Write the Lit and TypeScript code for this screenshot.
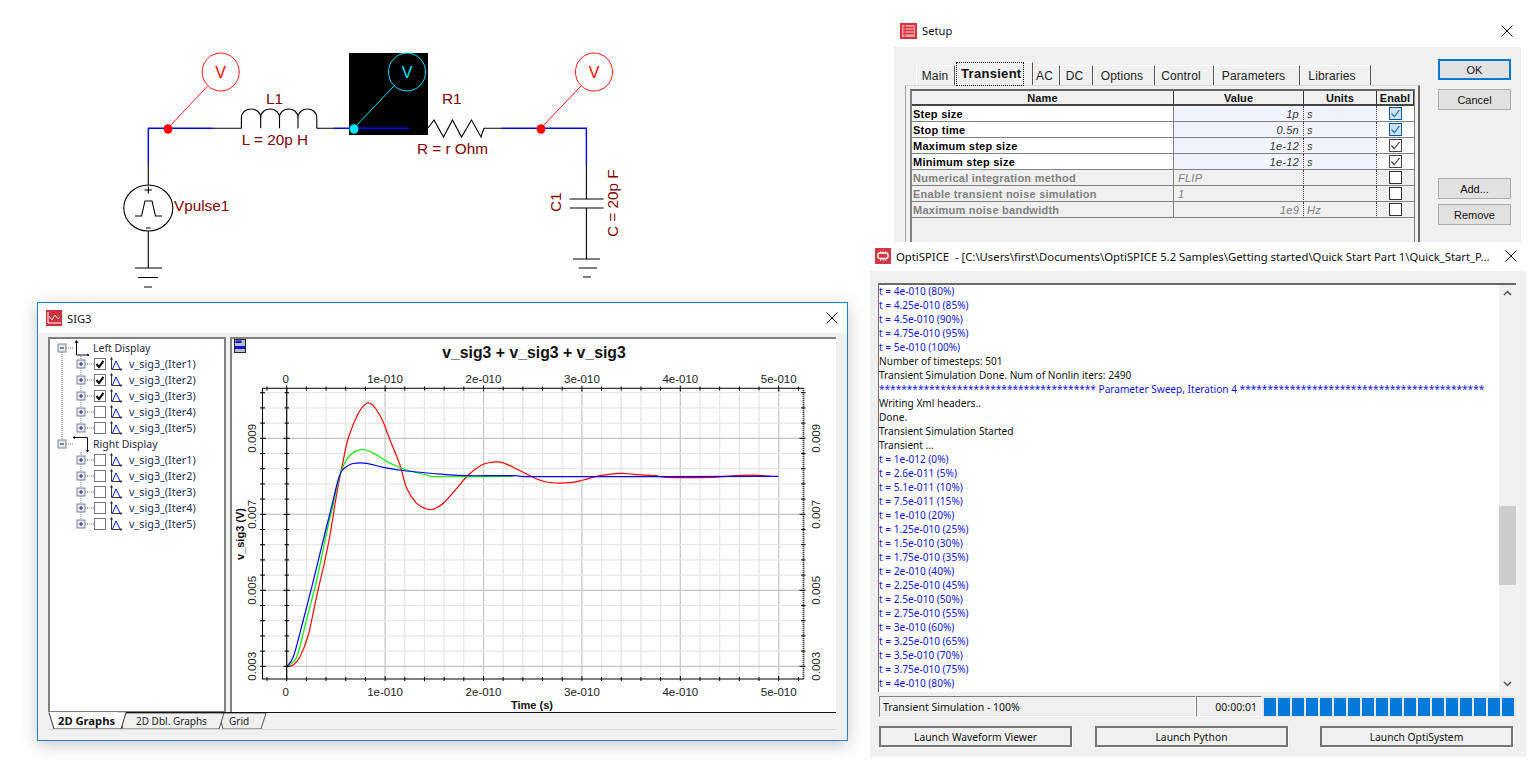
import { LitElement, html, css, svg } from "lit";
import { customElement } from "lit/decorators.js";

const SANS = css`"Liberation Sans", Arial, sans-serif`;
const UI = css`"Noto Sans", "Open Sans", sans-serif`;

/* ---------- circuit ---------- */
@customElement("circuit-view")
class CircuitView extends LitElement {
  static styles = css`
    :host { display: block; position: absolute; left: 0; top: 0; }
    svg { display: block; }
    text { font-family: ${SANS}; font-size: 15.3px; fill: #800000; }
    .v { font-size: 16px; fill: #ff0000; text-anchor: middle; }
    .vc { font-size: 16px; fill: #00e5ff; text-anchor: middle; }
    .blk { stroke: #000; fill: none; stroke-width: 1.1; }
    .blu { stroke: #0000ff; fill: none; stroke-width: 1.4; }
    .red { stroke: #ff0000; fill: none; stroke-width: .9; }
    .cy { stroke: #00e5ff; fill: none; stroke-width: 1; }
  `;
  probe(cx: number, dx: number, cyan = false) {
    const c = cyan ? "cy" : "red";
    const col = cyan ? "#00e5ff" : "#ff0000";
    return svg`
      <ellipse class=${c} cx=${cx} cy="72" rx="18.5" ry="19"></ellipse>
      <text class=${cyan ? "vc" : "v"} x=${cx} y="78">V</text>
      <line class=${c} x1=${dx} y1="128" x2=${cx - 13} y2="86"></line>
      <ellipse cx=${dx} cy="129" rx="4.4" ry="4.8" fill=${col}></ellipse>`;
  }
  render() {
    return html`<svg width="700" height="300" viewBox="0 0 700 300">
      <rect x="349" y="53" width="79" height="82" fill="#000"></rect>
      <path class="blk" d="M148.3 165V185M148.3 231V268M135 268H162M138 277.5H158M144 287H152"></path>
      <ellipse class="blk" cx="148.3" cy="208" rx="24.5" ry="23"></ellipse>
      <path class="blk" d="M135 216H141.5L145 201H152L155.5 216H162"></path>
      <path class="blk" stroke-width="1" d="M144.5 190H152M148.3 186.5V193.500M146 228H150.500"></path>
      <path class="blu" d="M148.3 165V128.300H213"></path>
      <path class="blk" d="M213 128.300H241.400M316.800 128.300H334"></path>
      <path class="blk" d="M241.400 128.300V118C241.400 106 260.700 106 260.700 118V128.300M260.700 118C260.700 106 279.500 106 279.500 118V128.300M279.500 118C279.500 106 298 106 298 118V128.300M298 118C298 106 316.800 106 316.800 118V128.300"></path>
      <path class="blu" d="M334 128.300H409"></path>
      <path class="blk" d="M428 128L434 120L443.500 137L452.500 120L461.500 137L471.500 120L481 137L484 128.300H502"></path>
      <path class="blu" d="M502 128.300H586.400V165"></path>
      <path class="blk" d="M586.400 165V199M569.600 199H603.600M569.600 208H603.600M586.400 208V259M573 259H600M578.600 268H597M583 277H591"></path>
      ${this.probe(220.7, 168)}
      ${this.probe(407, 354, true)}
      ${this.probe(594, 541)}
      <text x="266" y="104">L1</text>
      <text x="241.800" y="145">L = 20p H</text>
      <text x="442" y="104">R1</text>
      <text x="417" y="154">R = r Ohm</text>
      <text x="174" y="210.500">Vpulse1</text>
      <text transform="translate(561 212) rotate(-90)">C1</text>
      <text transform="translate(617.500 237) rotate(-90)">C = 20p F</text>
    </svg>`;
  }
}

/* ---------- shared icons ---------- */
const closeX = html`<svg width="12" height="12" viewBox="0 0 12 12"><path d="M.5.5L11.500 11.500M11.500.5L.5 11.500" stroke="#111" stroke-width="1" fill="none"></path></svg>`;
const setupIcon = html`<svg width="17" height="16" viewBox="0 0 17 16"><rect width="17" height="16" fill="#d9303c"></rect><rect x="2" y="2" width="13" height="12" fill="#e8a0a6"></rect><path d="M3 4.500H14M3 7.500H14M3 10.500H14" stroke="#d9303c" stroke-width="1.300"></path><path d="M5 2V14" stroke="#d9303c" stroke-width="1"></path></svg>`;
const spiceIcon = html`<svg width="16" height="16" viewBox="0 0 16 16"><rect width="16" height="16" fill="#d03a44"></rect><rect x="3" y="5" width="10" height="5.500" rx="2" fill="none" stroke="#fff" stroke-width="1.300"></rect><path d="M5.500 3.500V5M8 3.500V5M10.500 3.500V5M5.500 10.500V12.500M8 10.500V12.500M10.500 10.500V12.500" stroke="#fff" stroke-width="1.100"></path></svg>`;
const sigIcon = html`<svg width="16" height="16" viewBox="0 0 16 16"><rect width="16" height="16" fill="#c8323c"></rect><path d="M2 2V13H15" stroke="#fff" fill="none" stroke-width="1"></path><path d="M3 6L6 10L9 5L12 9L14 7" stroke="#ffe6e6" fill="none" stroke-width="1"></path></svg>`;

/* ---------- Setup dialog ---------- */
type Row = { name: string; value: string; right: boolean; unit: string; check: "blue" | "on" | "off"; off: boolean };
const ROWS: Row[] = [
  { name: "Step size", value: "1p", right: true, unit: "s", check: "blue", off: false },
  { name: "Stop time", value: "0.5n", right: true, unit: "s", check: "blue", off: false },
  { name: "Maximum step size", value: "1e-12", right: true, unit: "s", check: "on", off: false },
  { name: "Minimum step size", value: "1e-12", right: true, unit: "s", check: "on", off: false },
  { name: "Numerical integration method", value: "FLIP", right: false, unit: "", check: "off", off: true },
  { name: "Enable transient noise simulation", value: "1", right: false, unit: "", check: "off", off: true },
  { name: "Maximum noise bandwidth", value: "1e9", right: true, unit: "Hz", check: "off", off: true },
];
const TABS: [string, number][] = [
  ["Main", 39], ["Transient", 78], ["AC", 27], ["DC", 33], ["Options", 62], ["Control", 59], ["Parameters", 86], ["Libraries", 71],
];

@customElement("setup-dialog")
class SetupDialog extends LitElement {
  static styles = css`
    :host { display: flex; flex-direction: column; position: absolute; left: 894px; top: 15px; width: 627px; height: 227px; overflow: hidden; background: #fff; }
    .title { height: 32px; flex: none; box-sizing: border-box; padding: 0 8px 1px 6px; display: flex; align-items: center; gap: 5px; font: 11.2px ${UI}; color: #111; }
    .title span { flex: 1; }
    .body { flex: 1; display: flex; background: #f0f0f0; padding: 12px 10px 0 11px; gap: 18px; min-height: 0; }
    .left { width: 515px; flex: none; display: flex; flex-direction: column; }
    .tabs { height: 26px; flex: none; display: flex; align-items: flex-end; padding-left: 11px; font: 12px ${SANS}; letter-spacing: .15px; color: #222; }
    .tab { height: 20px; box-sizing: border-box; border-top: 1px solid #fff; border-left: 1px solid #fff; border-right: 1.5px solid #555; display: flex; align-items: center; justify-content: center; padding: 1px 4px 0 0; flex: none; }
    .tab:first-child { padding-right: 1px; }
    .tab:nth-child(n+6) { padding-right: 7px; }
    .tab.sel { height: 23px; font: bold 13px ${SANS}; letter-spacing: .3px; color: #111; padding: 0; position: relative; z-index: 1; justify-content: flex-start; }
    .tab.sel b { font-weight: bold; outline: 1px dotted #111; padding: 3px 1px 4px 4px; display: block; margin-left: 1px; }
    .frame { flex: 1; border-top: 1px solid #d8d8d8; border-left: 1px solid #a0a0a0; border-right: 2px solid #666; padding: 3px 0 0 4px; min-height: 0; display: flex; }
    .grid { flex: none; height: 200px; border-left: 2px solid #808080; border-right: 1px solid #808080; border-top: 2px solid #666; display: grid; grid-template-columns: 262px 130px 73px 37px; grid-template-rows: 15px repeat(7, 16px); align-content: start; font: 11px ${SANS}; letter-spacing: .25px; }
    .c { box-sizing: border-box; border-bottom: 1px solid #808080; display: flex; align-items: center; overflow: hidden; white-space: nowrap; }
    .h { font-weight: bold; justify-content: center; background: #f0f0f0; border-bottom: 2px solid #444; border-right: 1px solid #333; color: #111; letter-spacing: .1px; }
    .name { font-weight: bold; background: #fff; color: #000; padding-left: 1px; border-right: 1px solid #808080; }
    .val { font-style: italic; background: #f1f3fe; color: #333; padding: 0 4px; justify-content: flex-start; border-right: 1px dotted #444; }
    .val.r { justify-content: flex-end; }
    .unit { font-style: italic; background: #f1f3fe; color: #333; padding-left: 3px; border-right: 1px dotted #444; }
    .chk { background: #fff; justify-content: center; }
    .off.name, .off.val, .off.unit { background: #f0f0f0; color: #808080; }
    .off.chk { background: #f0f0f0; }
    .btns { width: 73px; flex: none; display: flex; flex-direction: column; }
    .btn { height: 21px; box-sizing: border-box; border: 1px solid #adadad; background: #e1e1e1; font: 11px ${SANS}; color: #111; display: flex; align-items: center; justify-content: center; flex: none; }
    .btn.def { border: 2px solid #0078d7; }
    .b2 { margin-top: 9px; }
    .b3 { margin-top: 68px; }
    .b4 { margin-top: 5px; }
  `;
  check(k: Row["check"]) {
    if (k === "blue") return html`<svg width="13" height="13" viewBox="0 0 13 13"><rect x=".5" y=".5" width="12" height="12" fill="#cce4f7" stroke="#005499"></rect><path d="M2.500 6.500L5.300 9.500L10.500 3" stroke="#2b6ea8" stroke-width="1.200" fill="none"></path></svg>`;
    if (k === "on") return html`<svg width="13" height="13" viewBox="0 0 13 13"><rect x=".5" y=".5" width="12" height="12" fill="#fff" stroke="#444"></rect><path d="M2.500 6.500L5.300 9.500L10.500 3" stroke="#444" stroke-width="1.200" fill="none"></path></svg>`;
    return html`<svg width="13" height="13" viewBox="0 0 13 13"><rect x=".5" y=".5" width="12" height="12" fill="#fff" stroke="#333"></rect></svg>`;
  }
  render() {
    return html`
      <div class="title">${setupIcon}<span>Setup</span>${closeX}</div>
      <div class="body">
        <div class="left">
          <div class="tabs">
            ${TABS.map(([t, w], i) => i === 1
              ? html`<div class="tab sel" style="width:${w}px"><b>${t}</b></div>`
              : html`<div class="tab" style="width:${w}px">${t}</div>`)}
          </div>
          <div class="frame">
            <div class="grid">
              <div class="c h">Name</div><div class="c h">Value</div><div class="c h">Units</div><div class="c h">Enabl</div>
              ${ROWS.map((r) => {
                const o = r.off ? "off" : "";
                return html`
                  <div class="c name ${o}">${r.name}</div>
                  <div class="c val ${o} ${r.right ? "r" : ""}">${r.value}</div>
                  <div class="c unit ${o}">${r.unit}</div>
                  <div class="c chk ${o}">${this.check(r.check)}</div>`;
              })}
            </div>
          </div>
        </div>
        <div class="btns">
          <div class="btn def">OK</div>
          <div class="btn b2">Cancel</div>
          <div class="btn b3">Add...</div>
          <div class="btn b4">Remove</div>
        </div>
      </div>`;
  }
}

/* ---------- OptiSPICE log window ---------- */
const pct = (v: string, p: number) => `t = ${v} (${p}%)`;
const STARS_L = "*".repeat(39);
const STARS_R = "*".repeat(44);
const LOG: [string, boolean][] = [
  [pct("4e-010", 80), true], [pct("4.25e-010", 85), true], [pct("4.5e-010", 90), true], [pct("4.75e-010", 95), true], [pct("5e-010", 100), true],
  ["Number of timesteps: 501", false],
  ["Transient Simulation Done. Num of Nonlin iters: 2490", false],
  [`${STARS_L} Parameter Sweep, Iteration 4 ${STARS_R}`, true],
  ["Writing Xml headers..", false], ["Done.", false], ["Transient Simulation Started", false], ["Transient ...", false],
  [pct("1e-012", 0), true], [pct("2.6e-011", 5), true], [pct("5.1e-011", 10), true], [pct("7.5e-011", 15), true], [pct("1e-010", 20), true],
  [pct("1.25e-010", 25), true], [pct("1.5e-010", 30), true], [pct("1.75e-010", 35), true], [pct("2e-010", 40), true], [pct("2.25e-010", 45), true],
  [pct("2.5e-010", 50), true], [pct("2.75e-010", 55), true], [pct("3e-010", 60), true], [pct("3.25e-010", 65), true], [pct("3.5e-010", 70), true],
  [pct("3.75e-010", 75), true], [pct("4e-010", 80), true],
];

@customElement("log-window")
class LogWindow extends LitElement {
  static styles = css`
    :host { display: flex; flex-direction: column; position: absolute; left: 870px; top: 242px; width: 656px; height: 515px; background: #fff; font: 10.5px ${UI}; color: #111; }
    .title { height: 29px; flex: none; box-sizing: border-box; padding: 0 9px 1px 5px; display: flex; align-items: center; gap: 5px; font: 11.3px ${UI}; white-space: pre; color: #111; }
    .title span { flex: 1; overflow: hidden; }
    .body { flex: 1; background: #f0f0f0; display: flex; flex-direction: column; padding: 12px 10px 10px 9px; }
    .log { height: 409px; flex: none; display: flex; box-sizing: border-box; border-top: 2px solid #696969; border-left: 1px solid #696969; background: #fff; margin-left: -1px; }
    .lines { flex: 1; min-width: 0; overflow: hidden; font-size: 10.1px; margin-top: -1px; }
    .line { height: 14px; line-height: 14px; white-space: nowrap; color: #111; }
    .line.b { color: #1414e6; }
    .sb { width: 17px; flex: none; background: #f0f0f0; display: flex; flex-direction: column; justify-content: space-between; align-items: center; position: relative; padding: 5px 0; box-sizing: border-box; }
    .thumb { position: absolute; left: 0; right: 0; top: 221px; height: 79px; background: #cdcdcd; }
    .status { display: flex; height: 21px; margin-top: 4px; flex: none; }
    .st { box-sizing: border-box; border-top: 1px solid #808080; border-left: 1px solid #808080; border-right: 1px solid #fff; border-bottom: 1px solid #fff; display: flex; align-items: center; }
    .s1 { width: 319px; padding-left: 3px; }
    .s2 { width: 66px; justify-content: flex-end; padding-right: 4px; }
    .prog { flex: 1; display: flex; gap: 2px; padding: 2px 2px 1px 2px; background: #e6e6e6; }
    .seg { width: 12px; flex: none; background: #0078d7; }
    .cmdb { width: 193px; height: 21px; box-sizing: border-box; border: 2px solid #757575; box-shadow: 1px 1px 0 #fff; display: flex; align-items: center; justify-content: center; font-size: 10.3px; }
    .gap { margin-left: 23px; }
    .gap2 { margin-left: 32px; }
    .cmdrow { display: flex; margin-top: 9px; }
  `;
  render() {
    return html`
      <div class="title">${spiceIcon}<span>OptiSPICE  - [C:\\Users\\first\\Documents\\OptiSPICE 5.2 Samples\\Getting started\\Quick Start Part 1\\Quick_Start_P...</span>${closeX}</div>
      <div class="body">
        <div class="log">
          <div class="lines">${LOG.map(([t, b]) => html`<div class="line ${b ? "b" : ""}">${t}</div>`)}</div>
          <div class="sb">
            <div class="thumb"></div>
            <svg width="9" height="6" viewBox="0 0 9 6"><path d="M1 5L4.500 1.500L8 5" stroke="#505050" stroke-width="1.500" fill="none"></path></svg>
            <svg width="9" height="6" viewBox="0 0 9 6"><path d="M1 1L4.500 4.500L8 1" stroke="#505050" stroke-width="1.500" fill="none"></path></svg>
          </div>
        </div>
        <div class="status">
          <div class="st s1">Transient Simulation - 100%</div>
          <div class="st s2">00:00:01</div>
          <div class="prog">${Array.from({ length: 18 }, () => html`<div class="seg"></div>`)}</div>
        </div>
        <div class="cmdrow">
          <div class="cmdb">Launch Waveform Viewer</div>
          <div class="cmdb gap">Launch Python</div>
          <div class="cmdb gap2">Launch OptiSystem</div>
        </div>
      </div>`;
  }
}

/* ---------- Plot ---------- */
const RED = "286.7,666.3 293.3,665 300,656.7 308.3,635 317.3,593.3 325,560 330.7,531 336,498 341.7,468 348.3,438 358.3,413.3 365,404.5 370,403.3 376.7,410 383.3,422.3 390,440 400,465 406.7,488.3 416.7,503.3 426.7,509 433.3,509.3 443.3,503.3 456.7,488.3 468.3,475 481.7,465 491.7,462.3 501.7,462.3 516.7,469 536.7,479 550,482.5 570,482.7 583.3,480 600,475.7 620,473.3 633.3,474.3 655,475.7 666.7,477.3 712.7,477.3 725,476.3 741.7,475.3 758,475.3 770,476.3";
const GREEN = "286.7,666.3 296.7,656.7 307.3,616.7 316.7,580 326.7,532.5 333,505 338,482 342,469 346,460.5 351,454.5 357,450.7 366,450 376.7,455 390,463.3 406.7,470 426.7,475 440,476.7 513.3,476.3";
const BLUE = "286.7,666.3 293.3,656.7 303.3,620 312.7,583.3 325,533 332,505 337,484 341,472 346,467 353,463.5 366.7,463.3 383.3,467.3 406.7,471 443.3,474.3 466.7,475.7 513.3,475.7 550,476.7 778.3,476.3";

/* smooth a measured polyline with a Catmull-Rom spline */
const smooth = (pts: string) => {
  const p = pts.split(" ").map((s) => s.split(",").map(Number));
  let d = `M${p[0][0]} ${p[0][1]}`;
  for (let i = 0; i < p.length - 1; i++) {
    const a = p[Math.max(i - 1, 0)], b = p[i], c = p[i + 1], e = p[Math.min(i + 2, p.length - 1)];
    const c1x = b[0] + (c[0] - a[0]) / 6, c1y = b[1] + (c[1] - a[1]) / 6;
    const c2x = c[0] - (e[0] - b[0]) / 6, c2y = c[1] - (e[1] - b[1]) / 6;
    d += `C${c1x.toFixed(1)} ${c1y.toFixed(1)} ${c2x.toFixed(1)} ${c2y.toFixed(1)} ${c[0]} ${c[1]}`;
  }
  return d;
};

const X0 = 286.7, DX = 19.68, Y0 = 666.3, DY = 15.2;
const range = (a: number, b: number) => Array.from({ length: b - a + 1 }, (_, i) => a + i);

@customElement("plot-view")
class PlotView extends LitElement {
  static styles = css`
    :host { display: block; background: #fff; border-left: 2px solid #808080; border-top: 2px solid #808080; box-sizing: border-box; overflow: hidden; }
    svg { display: block; }
    text { font-family: ${SANS}; font-size: 11.5px; fill: #222; }
    .m { text-anchor: middle; }
    .ttl { font-size: 15.8px; font-weight: bold; fill: #111; text-anchor: middle; }
    .b { font-size: 11px; font-weight: bold; fill: #111; }
  `;
  render() {
    const xs = range(-1, 26);
    const ys = range(0, 18);
    const xl: [number, string][] = [[0, "0"], [5, "1e-010"], [10, "2e-010"], [15, "3e-010"], [20, "4e-010"], [25, "5e-010"]];
    const yl: [number, string][] = [[0, "0.003"], [5, "0.005"], [10, "0.007"], [15, "0.009"]];
    return html`<svg width="604" height="373" viewBox="232 339 604 373">
      ${range(0, 25).map((k) => svg`<line x1=${X0 + DX * k} x2=${X0 + DX * k} y1="389" y2="678" stroke=${k % 5 === 0 ? "#c4c4c4" : "#e6e6e6"} stroke-width="1.200"></line>`)}
      ${ys.map((j) => svg`<line x1="263" x2="803" y1=${Y0 - DY * j} y2=${Y0 - DY * j} stroke=${j % 5 === 0 ? "#c4c4c4" : "#e6e6e6"} stroke-width="1.200"></line>`)}
      <path d=${smooth(RED)} fill="none" stroke="#ff0000" stroke-width="1.200"></path>
      <path d=${smooth(GREEN)} fill="none" stroke="#00f000" stroke-width="1.200"></path>
      <path d=${smooth(BLUE)} fill="none" stroke="#0000ff" stroke-width="1.200"></path>
      <path d="M262.500 388.300H803.500M262.500 388.300V679M286.700 388.300V679" stroke="#000" stroke-width="1.100" fill="none"></path>
      <path d="M262.500 679H803.500M803.500 388.300V679" stroke="#000" stroke-width="1.800" stroke-dasharray="1 1" fill="none"></path>
      ${xs.map((k) => { const x = X0 + DX * k; const big = k % 5 === 0; return svg`
        <line x1=${x} x2=${x} y1=${big ? 385.5 : 386.5} y2=${big ? 391.5 : 390.5} stroke="#000"></line>
        <line x1=${x} x2=${x} y1=${big ? 676 : 677} y2="681" stroke="#000"></line>`; })}
      ${ys.map((j) => { const y = Y0 - DY * j; const big = j % 5 === 0; return svg`
        <line x1="260" x2=${big ? 266 : 265} y1=${y} y2=${y} stroke="#000"></line>
        <line x1=${big ? 283.5 : 284.5} x2=${big ? 290 : 289} y1=${y} y2=${y} stroke="#000"></line>
        <line x1=${big ? 799.5 : 801} x2="805.500" y1=${y} y2=${y} stroke="#000"></line>`; })}
      <text class="ttl" x="534" y="358">v_sig3 + v_sig3 + v_sig3</text>
      ${xl.map(([k, t]) => svg`
        <text class="m" x=${X0 + DX * k - (k === 0 ? 1 : 0)} y="383">${t}</text>
        <text class="m" x=${X0 + DX * k - (k === 0 ? 1 : 0)} y="696">${t}</text>`)}
      ${yl.map(([j, t]) => svg`
        <text class="m" transform="translate(256 ${Y0 - DY * j}) rotate(-90)">${t}</text>
        <text class="m" transform="translate(820 ${Y0 - DY * j}) rotate(-90)">${t}</text>`)}
      <text class="b m" transform="translate(244 534) rotate(-90)">v_sig3 (V)</text>
      <text class="b m" x="532" y="709">Time (s)</text>
      <rect x="234.500" y="339.500" width="11" height="13" fill="#b8bcc8" stroke="#223"></rect>
      <rect x="235.500" y="340.500" width="6" height="2.500" fill="#1414e6"></rect>
      <rect x="235" y="346" width="10" height="3" fill="#1414e6"></rect>
    </svg>`;
  }
}

/* ---------- SIG3 window ---------- */
const ITEMS = [1, 2, 3, 4, 5];
const itemIcon = html`<svg width="12" height="16" viewBox="0 0 12 16"><path d="M1.500 2V13.500H12M.5 3.500L1.500 1.500L2.500 3.500M10.500 12.500L12 13.500L10.500 14.500" stroke="#222" stroke-width=".9" fill="none"></path><path d="M2.500 13L6 5L10 13" stroke="#1414e6" stroke-width="1" fill="none"></path></svg>`;
const expander = (cx: number, plus: boolean) => svg`
  <rect x=${cx - 4} y="4" width="8" height="8" fill="#e4e8ee" stroke="#7a8a99" stroke-width="1"></rect>
  <path d=${plus ? `M${cx - 2} 8H${cx + 2}M${cx} 6V10` : `M${cx - 2} 8H${cx + 2}`} stroke="#1a2a6a" stroke-width="1"></path>`;
const dots = "#777";

@customElement("sig-window")
class SigWindow extends LitElement {
  static styles = css`
    :host { display: flex; flex-direction: column; position: absolute; left: 37px; top: 302px; width: 811px; height: 439px; box-sizing: border-box; border: 1px solid #1883d7; background: #f0f0f0; box-shadow: 0 4px 16px rgba(0,0,0,.22); }
    .title { height: 30px; flex: none; background: #fff; display: flex; align-items: center; padding: 0 9px 0 8px; gap: 5px; font: 11.2px ${UI}; color: #111; }
    .title span { flex: 1; }
    .main { margin: 4px 10px 0 10px; display: grid; grid-template-columns: 178px 606px; column-gap: 4px; height: 375px; flex: none; }
    .tree { background: #fff; border: 2px solid #808080; box-sizing: border-box; padding-top: 1px; overflow: hidden; font: 10.5px ${UI}; color: #22305c; border-bottom: 1px solid #808080; }
    .row { display: flex; align-items: center; height: 16px; white-space: nowrap; }
    .row svg { flex: none; display: block; }
    .root { color: #2a2a3a; }
    .root .ico { margin-right: 4px; }
    .cb { width: 12px; height: 12px; box-sizing: border-box; border: 1px solid #777; background: #fff; margin-right: 4px; flex: none; display: flex; align-items: center; justify-content: center; }
    .lbl { margin: -2px 0 0 7px; font-size: 10.8px; }
    .strip { display: block; margin-left: 10px; flex: none; }
    .strip text { font: 10px ${UI}; fill: #222; }
    .strip .sel { font: bold 11.200px ${UI}; fill: #111; }
  `;
  branch(last: boolean, rootLine: boolean) {
    return html`<svg width="44" height="16" viewBox="0 0 44 16">
      ${rootLine ? svg`<line x1="12" x2="12" y1="0" y2="16" stroke=${dots} stroke-dasharray="1 1"></line>` : ""}
      <line x1="31" x2="31" y1="0" y2=${last ? 4 : 16} stroke=${dots} stroke-dasharray="1 1"></line>
      <line x1="35" x2="44" y1="8" y2="8" stroke=${dots} stroke-dasharray="1 1"></line>
      ${expander(31, true)}
    </svg>`;
  }
  rootRow(label: string, left: boolean) {
    return html`<div class="row root">
      <svg width="23" height="16" viewBox="0 0 23 16">
        ${left ? svg`<line x1="12" x2="12" y1="12" y2="16" stroke=${dots} stroke-dasharray="1 1"></line>` : svg`<line x1="12" x2="12" y1="0" y2="4" stroke=${dots} stroke-dasharray="1 1"></line>`}
        <line x1="16" x2="23" y1="8" y2="8" stroke=${dots} stroke-dasharray="1 1"></line>
        ${expander(12, false)}
      </svg>
      ${left
        ? html`<svg class="ico" width="16" height="16" viewBox="0 0 16 16"><path d="M3.500 1V15H16M2 3L3.500 .5L5 3M14 14L16 15L14 16" stroke="#111" fill="none" stroke-width="1"></path></svg>`
        : html`<svg class="ico" width="16" height="16" viewBox="0 0 16 16"><path d="M0 1.500H14.500V16M2 .5L0 1.500L2 2.500M13.500 14L14.500 16L15.500 14" stroke="#111" fill="none" stroke-width="1"></path></svg>`}
      <span>${label}</span>
    </div>`;
  }
  itemRow(n: number, checked: boolean, last: boolean, rootLine: boolean) {
    return html`<div class="row">
      ${this.branch(last, rootLine)}
      <span class="cb">${checked ? html`<svg width="10" height="10" viewBox="0 0 10 10"><path d="M1.500 5L4 8L8.500 1.800" stroke="#000" stroke-width="2" fill="none"></path></svg>` : ""}</span>
      ${itemIcon}
      <span class="lbl">v_sig3_(Iter${n})</span>
    </div>`;
  }
  render() {
    return html`
      <div class="title">${sigIcon}<span>SIG3</span>${closeX}</div>
      <div class="main">
        <div class="tree">
          ${this.rootRow("Left Display", true)}
          ${ITEMS.map((n) => this.itemRow(n, n <= 3, n === 5, true))}
          ${this.rootRow("Right Display", false)}
          ${ITEMS.map((n) => this.itemRow(n, false, n === 5, false))}
        </div>
        <plot-view></plot-view>
      </div>
      <svg class="strip" width="788" height="18" viewBox="48 712 788 18">
        <rect x="48" y="712" width="788" height="17" fill="#f0f0f0"></rect>
        <path d="M223 729H261L266 713H219Z" fill="#f0f0f0" stroke="#555"></path>
        <path d="M123 729H219L224 713H118Z" fill="#f0f0f0" stroke="#555"></path>
        <path d="M49 712.500L54 729H121L126 712.500" fill="#fff" stroke="#333"></path>
        <path d="M126 712.500H836" stroke="#111"></path>
        <path d="M48 729.500H836" stroke="#d8d8d8"></path>
        <text class="sel" x="58" y="725">2D Graphs</text>
        <text x="136" y="725">2D Dbl. Graphs</text>
        <text x="229" y="725">Grid</text>
      </svg>`;
  }
}

@customElement("app-root")
class AppRoot extends LitElement {
  static styles = css`
    :host { display: block; position: relative; width: 1538px; height: 768px; background: #fff; overflow: hidden; }
  `;
  render() {
    return html`
      <circuit-view></circuit-view>
      <setup-dialog></setup-dialog>
      <log-window></log-window>
      <sig-window></sig-window>`;
  }
}
